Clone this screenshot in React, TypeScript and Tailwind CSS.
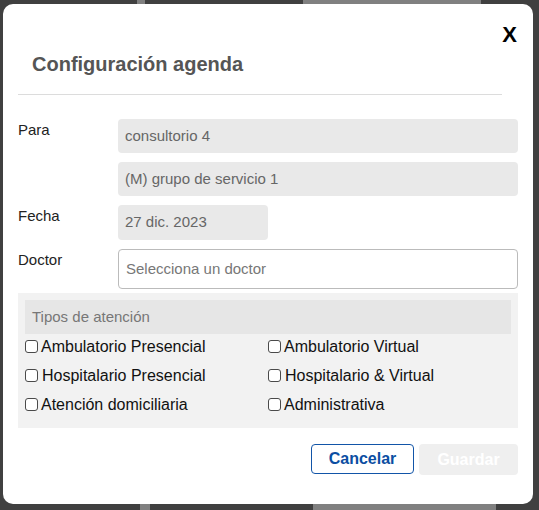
import React from 'react';

/* ─── Checkbox option ──────────────────────────────────────── */
function Option({ label, gap = 'ml-[3px]' }: { label: string; gap?: string }) {
  return (
    <label className="flex items-center h-[29px]">
      <span className="w-[13px] h-[13px] rounded-[3px] border border-[#4a4a4a] bg-white shrink-0" />
      <span className={`${gap} text-[16px] text-[#111]`}>{label}</span>
    </label>
  );
}

/* ─── Form row ─────────────────────────────────────────────── */
function Row({ label, children }: { label?: string; children: React.ReactNode }) {
  return (
    <div className="flex">
      <div className="w-[100px] shrink-0 text-[15px] text-[#222]">{label}</div>
      <div className="flex-1">{children}</div>
    </div>
  );
}

export default function App() {
  const left = ['Ambulatorio Presencial', ' Hospitalario Presencial', 'Atención domiciliaria'];
  const right = ['Ambulatorio Virtual', ' Hospitalario & Virtual', 'Administrativa'];

  return (
    <div
      className="w-[539px] h-[510px] bg-[#404040] flex flex-col overflow-hidden"
      style={{ fontFamily: '"Liberation Sans", Arial, sans-serif' }}
    >
      {/* backdrop strip */}
      <div className="h-[4px] flex shrink-0">
        <div className="w-[137px]" />
        <div className="w-[8px] bg-[#808080]" />
        <div className="w-[158px]" />
        <div className="w-[178px] bg-[#808080]" />
      </div>

      {/* Modal */}
      <div className="ml-[3px] w-[530px] h-[500px] bg-white rounded-[10px] px-[15px] shrink-0">
        <div className="flex justify-end pt-[20px] pr-[1px] h-[40px]">
          <span className="text-[22px] font-bold leading-none text-black">X</span>
        </div>
        <h2 className="pl-[14px] pt-[8px] text-[20px] font-bold text-[#555] leading-[24px]">
          Configuración agenda
        </h2>
        <div className="mt-[18px] w-[484px] h-px bg-[#dcdcdc]" />

        <div className="mt-[24px] flex flex-col gap-[9px]">
          <Row label="Para">
            <div className="h-[34px] rounded-[4px] bg-[#e9e9e9] flex items-center px-[7px] text-[15px] text-[#666]">
              consultorio 4
            </div>
          </Row>
          <Row>
            <div className="h-[34px] rounded-[4px] bg-[#e9e9e9] flex items-center px-[7px] text-[15px] text-[#666]">
              (M) grupo de servicio 1
            </div>
          </Row>
          <Row label="Fecha">
            <div className="w-[150px] h-[35px] rounded-[4px] bg-[#e9e9e9] flex items-center px-[7px] text-[15px] text-[#666]">
              27 dic. 2023
            </div>
          </Row>
          <Row label="Doctor">
            <div className="h-[40px] rounded-[4px] border border-[#bbb] bg-white flex items-center px-[7px] text-[15px] text-[#777]">
              Selecciona un doctor
            </div>
          </Row>
        </div>

        {/* Tipos de atención */}
        <div className="mt-[4px] bg-[#f2f2f2] h-[135px] p-[7px] pb-0">
          <div className="h-[34px] bg-[#e6e6e6] flex items-center px-[7px] text-[15px] text-[#777]">
            Tipos de atención
          </div>
          <div className="grid grid-cols-2 -mt-[2px]">
            <div className="flex flex-col">
              {left.map(l => (
                <Option key={l} label={l} gap={l.startsWith(' ') ? 'ml-[4px]' : 'ml-[3px]'} />
              ))}
            </div>
            <div className="flex flex-col">
              {right.map(l => (
                <Option key={l} label={l} gap={l.startsWith(' ') ? 'ml-[4px]' : 'ml-[3px]'} />
              ))}
            </div>
          </div>
        </div>

        {/* Actions */}
        <div className="mt-[16px] flex justify-end gap-[5px]">
          <button className="w-[103px] h-[30px] rounded-[4px] border border-[#1255a8] text-[#0b4ea2] text-[16px] font-bold bg-white">
            Cancelar
          </button>
          <button className="w-[99px] h-[31px] rounded-[4px] bg-[#efefef] text-white text-[16px] font-bold">
            Guardar
          </button>
        </div>
      </div>

      {/* backdrop strip */}
      <div className="h-[6px] flex shrink-0">
        <div className="w-[140px]" />
        <div className="w-[10px] bg-[#808080]" />
        <div className="w-[163px]" />
        <div className="w-[183px] bg-[#808080]" />
      </div>
    </div>
  );
}
